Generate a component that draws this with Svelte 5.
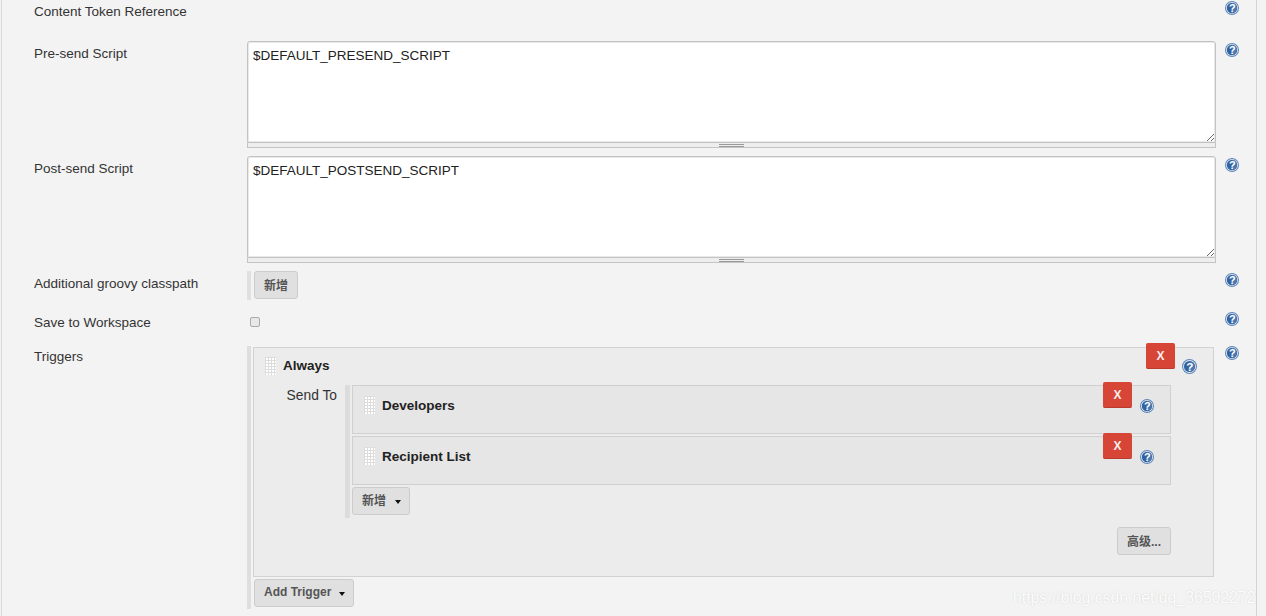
<script lang="ts">
	const scripts = [
		{ label: 'Pre-send Script', value: '$DEFAULT_PRESEND_SCRIPT' },
		{ label: 'Post-send Script', value: '$DEFAULT_POSTSEND_SCRIPT' }
	];
	const recipients = ['Developers', 'Recipient List'];
</script>

{#snippet help()}
	<svg class="help-icon" viewBox="0 0 16 16" aria-hidden="true">
		<circle cx="8" cy="8" r="8" fill="#5f86b8" />
		<circle cx="8" cy="8" r="6.9" fill="#dfe8f3" />
		<circle cx="8" cy="8" r="5.9" fill="#33629f" />
		<path d="M8 2.4a5.6 5.6 0 0 1 0 11.2z" fill="#4a78b0" />
		<text x="8.3" y="12.6" text-anchor="middle" class="help-mark">?</text>
	</svg>
{/snippet}

<main class="page">
	<div class="row token">
		<div class="label">Content Token Reference</div>
		<div></div>
		<div class="help">{@render help()}</div>
	</div>

	{#each scripts as s}
		<div class="row script">
			<div class="label">{s.label}</div>
			<div class="field">
				<textarea readonly value={s.value}></textarea>
				<div class="grippie"><span></span></div>
			</div>
			<div class="help">{@render help()}</div>
		</div>
	{/each}

	<div class="row classpath">
		<div class="label">Additional groovy classpath</div>
		<div class="repeat">
			<button class="btn add">新增</button>
		</div>
		<div class="help">{@render help()}</div>
	</div>

	<div class="row workspace">
		<div class="label">Save to Workspace</div>
		<div><input type="checkbox" /></div>
		<div class="help">{@render help()}</div>
	</div>

	<div class="row triggers">
		<div class="label">Triggers</div>
		<div class="trigger-list">
			<section class="trigger">
				<button class="delete top-delete">X</button>
				<div class="top-help">{@render help()}</div>
				<header class="trigger-head">
					<i class="grip"></i>
					<b>Always</b>
				</header>
				<div class="send-to">
					<div class="send-label">Send To</div>
					<div class="recipient-list">
						{#each recipients as r}
							<div class="recipient">
								<button class="delete">X</button>
								<div class="recipient-help">{@render help()}</div>
								<i class="grip"></i>
								<b>{r}</b>
							</div>
						{/each}
						<button class="btn dropdown small">新增<span class="caret"></span></button>
					</div>
				</div>
				<div class="advanced">
					<button class="btn">高级...</button>
				</div>
			</section>
			<button class="btn dropdown">Add Trigger<span class="caret"></span></button>
		</div>
		<div class="help">{@render help()}</div>
	</div>

	<div class="watermark">https://blog.csdn.net/qq_36502272</div>
</main>

<style>
	:global(body) {
		background: #f3f3f3;
	}

	.page {
		position: relative;
		box-sizing: border-box;
		width: 1256px;
		height: 616px;
		margin-left: 1px;
		overflow: hidden;
		background: #f3f3f3;
		border-left: 1px solid #d9d9d9;
		border-right: 1px solid #d3d3d3;
		color: #333;
		font: 13.5px/20px 'Liberation Sans', 'Noto Sans CJK SC', sans-serif;
	}

	.row {
		display: grid;
		grid-template-columns: 245px 969px 40px;
	}

	.token { height: 41px; }
	.script { height: 115px; }
	.classpath { height: 38px; }
	.workspace { height: 37px; }

	.label {
		padding-left: 32px;
		padding-top: 1px;
	}

	.token .label { padding-top: 2px; }
	.script .label { padding-top: 3px; }
	.classpath .label { padding-top: 3px; }
	.workspace .label { padding-top: 4px; }

	.help {
		padding: 2px 0 0 9px;
		line-height: 0;
	}

	.token .help { padding-top: 1px; }
	.workspace .help { padding-top: 3px; }
	.triggers .help { padding-top: 0; }

	.help-icon {
		display: block;
		width: 14px;
		height: 14px;
	}

	.top-help .help-icon {
		width: 15px;
		height: 15px;
	}

	.help-mark {
		fill: #fff;
		font: bold 12.5px 'Liberation Sans', sans-serif;
	}

	.field {
		line-height: 0;
	}

	textarea {
		display: block;
		box-sizing: border-box;
		width: 969px;
		height: 102px;
		margin: 0;
		padding: 5px;
		border: 1px solid #c2c2c2;
		border-radius: 3px 3px 0 0;
		box-shadow: inset 0 0 0 1px #e9e9e9;
		background: #fff;
		color: #222;
		font: 13.5px/17px 'Liberation Sans', sans-serif;
		outline: none;
		resize: vertical;
	}

	.grippie {
		display: flex;
		justify-content: center;
		box-sizing: border-box;
		width: 969px;
		height: 5px;
		background: #eee;
		border: 1px solid #c4c4c4;
		border-top: 0;
	}

	.grippie span {
		width: 25px;
		height: 1px;
		margin-top: 1px;
		border-top: 1px solid #999;
		border-bottom: 1px solid #999;
	}

	.repeat {
		align-self: start;
		height: 29px;
		padding-left: 3px;
		border-left: 4px solid #e0e0e0;
		box-sizing: border-box;
		width: 100%;
	}

	.btn {
		box-sizing: border-box;
		height: 28px;
		padding: 0 9px 2px;
		background: #e0e0e0;
		border: 1px solid #ccc;
		border-radius: 3px;
		color: #555;
		font: bold 12px 'Liberation Sans', 'Noto Sans CJK SC', sans-serif;
	}

	.dropdown {
		display: flex;
		align-items: center;
		padding-right: 8px;
	}

	.caret {
		width: 0;
		height: 0;
		margin-left: 8px;
		margin-top: 4px;
		border-left: 3.5px solid transparent;
		border-right: 3.5px solid transparent;
		border-top: 4px solid #111;
	}

	input[type='checkbox'] {
		display: block;
		box-sizing: border-box;
		width: 10px;
		height: 10px;
		margin: 8px 0 0 3px;
		appearance: none;
		background: #e8e8e8;
		border: 1px solid #aaa;
		border-radius: 2px;
	}

	.trigger-list {
		box-sizing: border-box;
		height: 263px;
		border-left: 4px solid #dedede;
		padding-left: 2px;
	}

	.trigger {
		position: relative;
		box-sizing: border-box;
		width: 961px;
		height: 230px;
		margin-top: 1px;
		margin-bottom: 2px;
		background: #ececec;
		border: 1px solid #d2d2d2;
	}

	.trigger-list > .btn {
		margin-left: 1px;
	}

	.trigger-head {
		display: flex;
		align-items: flex-start;
		gap: 7px;
		box-sizing: border-box;
		height: 37px;
		padding: 9px 0 0 11px;
	}

	.trigger-head b {
		line-height: 17px;
	}

	b {
		font-weight: bold;
		color: #222;
	}

	.grip {
		display: block;
		flex: none;
		width: 11px;
		height: 18px;
		background-color: #fff;
		background-image:
			linear-gradient(#dcdcdc 1px, transparent 1px),
			linear-gradient(90deg, #dcdcdc 1px, transparent 1px);
		background-size: 3px 3px;
	}

	.delete {
		position: absolute;
		box-sizing: border-box;
		width: 29px;
		height: 26px;
		padding: 0;
		background: #d64535;
		border: 0;
		border-bottom: 1px solid #b93a2c;
		border-radius: 2px;
		color: #fbeeee;
		font: bold 12px 'Liberation Sans', sans-serif;
	}

	.top-delete {
		top: -5px;
		right: 38px;
	}

	.top-help {
		position: absolute;
		top: 11px;
		right: 16px;
		line-height: 0;
	}

	.send-to {
		display: grid;
		grid-template-columns: 91px 1fr;
	}

	.send-label {
		text-align: right;
		padding-right: 8px;
		line-height: 22px;
		font-size: 13.8px;
		white-space: nowrap;
	}

	.recipient-list {
		box-sizing: border-box;
		height: 133px;
		width: 826px;
		border-left: 5px solid #dcdcdc;
		padding-left: 2px;
	}

	.recipient {
		position: relative;
		display: flex;
		align-items: flex-start;
		gap: 7px;
		box-sizing: border-box;
		width: 819px;
		height: 49px;
		margin-bottom: 2px;
		padding: 10px 0 0 11px;
		background: #e6e6e6;
		border: 1px solid #d0d0d0;
	}

	.recipient b {
		line-height: 20px;
	}

	.recipient .delete {
		top: -4px;
		right: 38px;
	}

	.recipient-help {
		position: absolute;
		top: 13px;
		right: 16px;
		line-height: 0;
	}

	.small {
		padding: 0 8px 4px 9px;
	}

	.small .caret {
		margin-left: 9px;
		margin-top: 6px;
	}

	.advanced {
		display: flex;
		justify-content: flex-end;
		width: 917px;
		padding-top: 9px;
	}

	.watermark {
		position: absolute;
		left: 1011px;
		top: 588px;
		white-space: nowrap;
		color: #fcfcfc;
		text-shadow: 0 0 1.5px #cfcfcf;
		font: 15.8px/20px 'Liberation Sans', sans-serif;
	}
</style>
